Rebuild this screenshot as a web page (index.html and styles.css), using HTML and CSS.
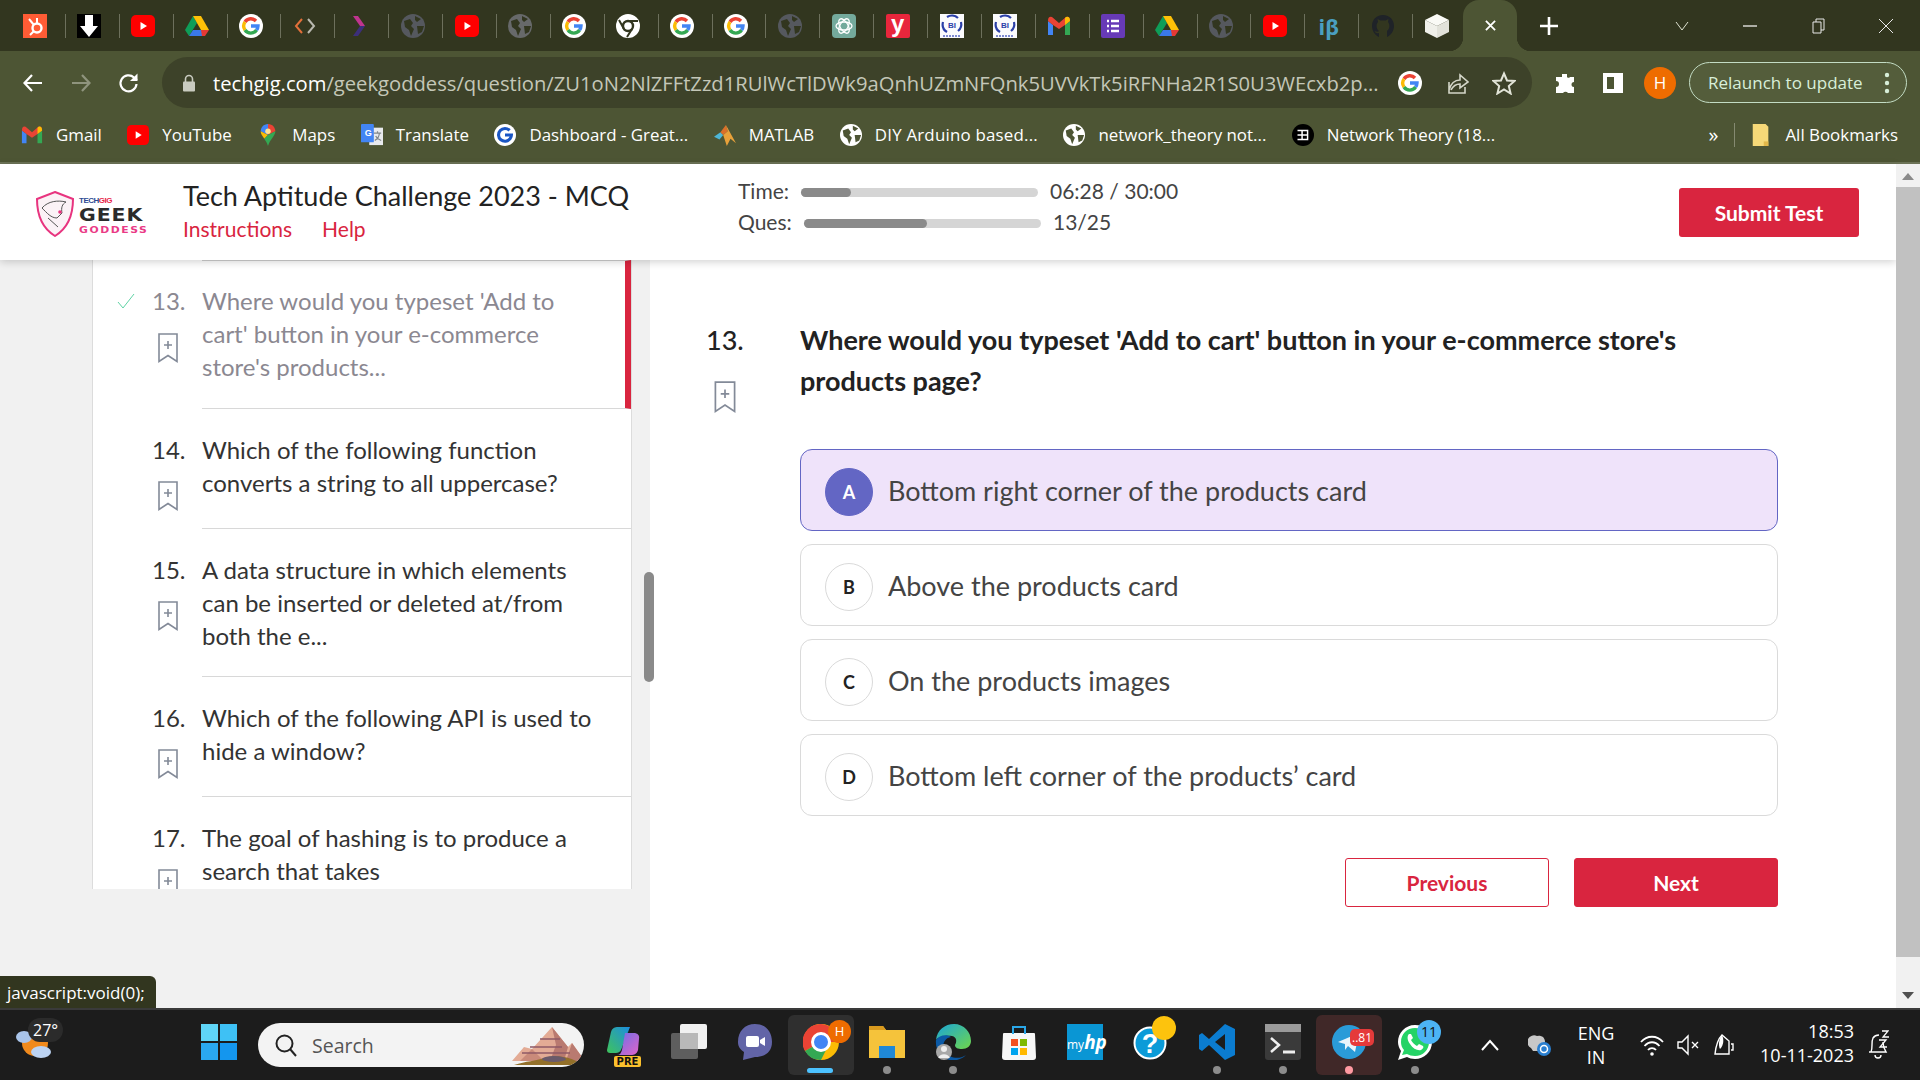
FILE: index.html
```html
<!DOCTYPE html>
<html lang="en">
<head>
    <meta charset="UTF-8">
    <title>Tech Aptitude Challenge 2023 - MCQ</title>
    <link rel="stylesheet" href="styles.css">
</head>
<body>
    <!-- icons used more than once -->
    <svg class="sprite" xmlns="http://www.w3.org/2000/svg">
        <symbol id="i-g" viewBox="0 0 24 24">
            <circle cx="12" cy="12" r="12" fill="#fff"/>
            <g fill="none" stroke-width="3.4">
                <path d="M17 7 A7 7 0 0 0 6 8" stroke="#ea4335"/>
                <path d="M6 8 A7 7 0 0 0 6 16" stroke="#fbbc05"/>
                <path d="M6 16 A7 7 0 0 0 17.6 16" stroke="#34a853"/>
                <path d="M17.6 16 A7 7 0 0 0 19 12 H12" stroke="#4285f4"/>
            </g>
        </symbol>
        <symbol id="i-g-blue" viewBox="0 0 24 24">
            <circle cx="12" cy="12" r="12" fill="#fff"/>
            <path d="M17 7 A7 7 0 1 0 17.6 16 A7 7 0 0 0 19 12 H12" fill="none" stroke="#1a56c4" stroke-width="3.4"/>
        </symbol>
        <symbol id="i-yt" viewBox="0 0 24 24">
            <rect y="1" width="24" height="22" rx="5" fill="#f00"/>
            <path d="M9.5 8 L16 12 L9.5 16z" fill="#fff"/>
        </symbol>
        <symbol id="i-drive" viewBox="0 0 24 24">
            <path d="M8 2 L0 16 L4 22 L12 9z" fill="#0f9d58"/>
            <path d="M8 2 H16 L24 16 H16z" fill="#ffc107"/>
            <path d="M4 22 L8 16 H18 L20 22z" fill="#3a78e8"/>
            <path d="M16 16 H24 L20 22 H17z" fill="#e53935"/>
        </symbol>
        <symbol id="i-gmail" viewBox="0 0 24 24">
            <path d="M1 7 V21 H6 V11z" fill="#4285f4"/>
            <path d="M23 7 V21 H18 V11z" fill="#34a853"/>
            <path d="M1 7 Q1 2 5 3 L12 9 L19 3 Q23 2 23 7 L18 11 L12 15 L6 11z" fill="#ea4335"/>
            <path d="M23 7 Q23 2 19 3 L18 4 V11z" fill="#fbbc05"/>
        </symbol>
        <symbol id="i-globe" viewBox="0 0 24 24">
            <circle cx="12" cy="12" r="12" fill="currentColor"/>
            <path d="M3 7 L9 5 L12 9 L10 12 L13 15 L10 22 L8 16 L4 13z M14 2 L20 5 L16 8 L14 6z M16 12 H23 L21 18 L17 20z" class="land"/>
        </symbol>
        <symbol id="i-bits" viewBox="0 0 24 24">
            <rect width="24" height="24" fill="#fbfbfd"/>
            <g fill="none" stroke="#2b3fa8" stroke-width="2.2">
                <path d="M7 3 A9 9 0 0 1 18 4"/>
                <path d="M21 8 A9 9 0 0 1 18 17"/>
                <path d="M3 8 A9 9 0 0 0 7 18"/>
            </g>
            <text x="12" y="14" class="bits-txt">BI</text>
            <path d="M3 22 H21" stroke="#7f8bd0" stroke-width="2" stroke-dasharray="2 1"/>
        </symbol>
        <symbol id="i-mark" viewBox="0 0 20 30">
            <path d="M1 1 H19 V28.5 L10 22.5 L1 28.5z M10 8 V16 M6 12 H14" fill="none" stroke="currentColor" stroke-width="1.6"/>
        </symbol>
    </svg>

    <div class="tabstrip">
        <div class="tab">
            <svg class="ic" viewBox="0 0 24 24"><rect width="24" height="24" fill="#ff5c35"/><circle cx="14" cy="14" r="4.5" fill="none" stroke="#fff" stroke-width="2.4"/><path d="M14 9 V4 M6 5 L11 11 M11 17 L7 21" stroke="#fff" stroke-width="2"/></svg>
        </div>
        <div class="tab">
            <svg class="ic" viewBox="0 0 24 24"><rect width="24" height="24" fill="#000"/><path d="M8 1 H16 V12 H21 L12 23 L3 12 H8z" fill="#fff"/></svg>
        </div>
        <div class="tab"><svg class="ic"><use href="#i-yt"/></svg></div>
        <div class="tab"><svg class="ic"><use href="#i-drive"/></svg></div>
        <div class="tab"><svg class="ic"><use href="#i-g"/></svg></div>
        <div class="tab">
            <svg class="ic" viewBox="0 0 24 24"><path d="M9 5 L3 12 L9 19" fill="none" stroke="#e2703a" stroke-width="2"/><path d="M15 5 L21 12 L15 19" fill="none" stroke="#b9b9b0" stroke-width="2"/></svg>
        </div>
        <div class="tab">
            <svg class="ic" viewBox="0 0 24 24"><path d="M6 2 H11 L18 12 H13z" fill="#c0348f"/><path d="M6 22 H11 L18 12 H13z" fill="#3c2f7a"/></svg>
        </div>
        <div class="tab globe-gray"><svg class="ic"><use href="#i-globe"/></svg></div>
        <div class="tab"><svg class="ic"><use href="#i-yt"/></svg></div>
        <div class="tab globe-mid"><svg class="ic"><use href="#i-globe"/></svg></div>
        <div class="tab"><svg class="ic"><use href="#i-g"/></svg></div>
        <div class="tab">
            <svg class="ic" viewBox="0 0 24 24"><circle cx="12" cy="12" r="12" fill="#fff"/><circle cx="12" cy="12" r="5" fill="none" stroke="#32361f" stroke-width="2.4"/><path d="M12 7 H22 M8 15 L3 6 M16 15 L11 23" stroke="#32361f" stroke-width="2"/></svg>
        </div>
        <div class="tab"><svg class="ic"><use href="#i-g"/></svg></div>
        <div class="tab"><svg class="ic"><use href="#i-g"/></svg></div>
        <div class="tab globe-gray"><svg class="ic"><use href="#i-globe"/></svg></div>
        <div class="tab">
            <svg class="ic" viewBox="0 0 24 24"><rect width="24" height="24" rx="4" fill="#74aa9c"/><g fill="none" stroke="#fff" stroke-width="1.3"><ellipse cx="12" cy="12" rx="8" ry="4"/><ellipse cx="12" cy="12" rx="8" ry="4" transform="rotate(60 12 12)"/><ellipse cx="12" cy="12" rx="8" ry="4" transform="rotate(120 12 12)"/></g></svg>
        </div>
        <div class="tab"><span class="tab-y">y</span></div>
        <div class="tab"><svg class="ic"><use href="#i-bits"/></svg></div>
        <div class="tab"><svg class="ic"><use href="#i-bits"/></svg></div>
        <div class="tab"><svg class="ic"><use href="#i-gmail"/></svg></div>
        <div class="tab">
            <svg class="ic" viewBox="0 0 24 24"><rect width="24" height="24" rx="2" fill="#673ab7"/><path d="M6 7 H8 M10 7 H18 M6 12 H8 M10 12 H18 M6 17 H8 M10 17 H18" stroke="#fff" stroke-width="2.4"/></svg>
        </div>
        <div class="tab"><svg class="ic"><use href="#i-drive"/></svg></div>
        <div class="tab globe-gray"><svg class="ic"><use href="#i-globe"/></svg></div>
        <div class="tab"><svg class="ic"><use href="#i-yt"/></svg></div>
        <div class="tab"><span class="tab-ib">iβ</span></div>
        <div class="tab">
            <svg class="ic" viewBox="0 0 24 24"><path d="M12 1 C5 1 1 6 1 12 C1 17 4 21 8 23 V19 C5 20 4 18 3.500 17 C6 18 7 18 8 17 C5 15 5 10 7 8 L6.500 5 L9.500 6.500 H14.500 L17.500 5 L17 8 C19 10 19 15 16 17 V23 C20 21 23 17 23 12 C23 6 19 1 12 1z" fill="#1f2328"/></svg>
        </div>
        <div class="tab tab-last">
            <svg class="ic" viewBox="0 0 24 24"><path d="M12 0 L24 6 L12 12 L0 6z" fill="#fafaf6"/><path d="M0 6 L12 12 V24 L0 18z" fill="#f0f0ea"/><path d="M24 6 L12 12 V24 L24 18z" fill="#e2e2da"/></svg>
        </div>
        <div class="tab-active">
            <svg class="tab-x" viewBox="0 0 12 12"><path d="M1 1 L11 11 M11 1 L1 11" stroke="#fff" stroke-width="2"/></svg>
        </div>
        <svg class="tab-new" viewBox="0 0 18 18"><path d="M9 0 V18 M0 9 H18" stroke="#fff" stroke-width="2.600"/></svg>
        <div class="win-ctrls">
            <div class="win-btn">
                <svg class="win-ic" viewBox="0 0 16 16"><path d="M2 4 L8 12 L14 4" fill="none" stroke="#dfe3d2" stroke-width="1"/></svg>
            </div>
            <div class="win-btn">
                <svg class="win-ic" viewBox="0 0 16 16"><path d="M1 8 H15" stroke="#fff" stroke-width="1.2"/></svg>
            </div>
            <div class="win-btn">
                <svg class="win-ic" viewBox="0 0 16 16"><path d="M3 4 H11 V15 H3z M6 4 V1 H14 V12 H11" fill="none" stroke="#e8e8e8" stroke-width="1"/></svg>
            </div>
            <div class="win-btn">
                <svg class="win-ic" viewBox="0 0 16 16"><path d="M1 1 L15 15 M15 1 L1 15" stroke="#e8e8e8" stroke-width="1"/></svg>
            </div>
        </div>
    </div>

    <div class="toolbar">
        <div class="tool-btn">
            <svg class="tool-ic" viewBox="0 0 24 24"><path d="M21 12 H4 M11 4 L3.500 12 L11 20" fill="none" stroke="#fff" stroke-width="2.2"/></svg>
        </div>
        <div class="tool-btn">
            <svg class="tool-ic" viewBox="0 0 24 24"><path d="M3 12 H20 M13 4 L20.500 12 L13 20" fill="none" stroke="#8f947d" stroke-width="2.2"/></svg>
        </div>
        <div class="tool-btn">
            <svg class="tool-ic" viewBox="0 0 24 24"><path d="M19.500 13 A8 8 0 1 1 17 6.500 L20 9" fill="none" stroke="#fff" stroke-width="2.2"/><path d="M20.500 2.500 V10 H13z" fill="#fff"/></svg>
        </div>
        <div class="omnibox">
            <svg class="lock" viewBox="0 0 14 18"><path d="M3.500 8 V5 A3.500 3.500 0 0 1 10.500 5 V8" fill="none" stroke="#c9cbc0" stroke-width="1.600"/><rect x="1" y="7.500" width="12" height="10" rx="1" fill="#c9cbc0"/></svg>
            <span class="url"><b>techgig.com</b>/geekgoddess/question/ZU1oN2NlZFFtZzd1RUlWcTlDWk9aQnhUZmNFQnk5UVVkTk5iRFNHa2R1S0U3WEcxb2p...</span>
            <div class="omni-icons">
                <svg class="omni-ic"><use href="#i-g"/></svg>
                <svg class="omni-ic" viewBox="0 0 24 24"><path d="M4 11 V22 H20 V16 M4 19 C6 12 10 9 15 9 V4 L23 11 L15 17 V13 C11 13 8 15 6 19" fill="none" stroke="#d4d6c8" stroke-width="1.600"/></svg>
                <svg class="omni-ic" viewBox="0 0 24 24"><path d="M12 2.500 L15 9.500 L22.500 10 L16.800 15 L18.600 22.500 L12 18.500 L5.400 22.500 L7.200 15 L1.500 10 L9 9.500z" fill="none" stroke="#e2e4d8" stroke-width="2"/></svg>
            </div>
        </div>
        <div class="tool-btn tool-ext">
            <svg class="tool-ic" viewBox="0 0 24 24"><path d="M9 3 H14 V6 A2 2 0 0 0 17 6 H21 V11 A2.500 2.500 0 0 0 21 16 V22 H15 A3 3 0 0 0 10 22 H3 V16 A3 3 0 0 0 3 10 V6 H9z" fill="#fff"/></svg>
        </div>
        <div class="tool-btn">
            <svg class="tool-ic" viewBox="0 0 24 24"><path d="M2 2 H22 V22 H2z M6 6 V18 H13 V6z" fill="#fff" fill-rule="evenodd"/></svg>
        </div>
        <div class="avatar-slot"><span class="avatar">H</span></div>
        <div class="relaunch">
            <span>Relaunch to update</span>
            <svg class="dots" viewBox="0 0 6 24"><circle cx="3" cy="4" r="2.200"/><circle cx="3" cy="12" r="2.200"/><circle cx="3" cy="20" r="2.200"/></svg>
        </div>
    </div>

    <div class="bookmarks">
        <a class="bm"><svg class="bm-ic"><use href="#i-gmail"/></svg>Gmail</a>
        <a class="bm"><svg class="bm-ic"><use href="#i-yt"/></svg>YouTube</a>
        <a class="bm">
            <svg class="bm-ic" viewBox="0 0 24 24"><path d="M12 0 C7 0 4 4 4 8 L12 12z" fill="#4285f4"/><path d="M12 0 C17 0 20 4 20 8 L12 12z" fill="#ea4335"/><path d="M4 8 C4 11 6 13 8 16 L12 12z" fill="#fbbc05"/><path d="M20 8 C20 13 14 17 12 24 C11 20 9 18 8 16 L12 12z" fill="#34a853"/><circle cx="12" cy="8" r="3" fill="#fde293"/></svg>
            Maps
        </a>
        <a class="bm">
            <svg class="bm-ic" viewBox="0 0 24 24"><rect x="9" y="4" width="15" height="19" fill="#e8eaed"/><rect y="0" width="14" height="20" rx="1" fill="#4285f4"/><text x="4" y="13" class="tr-g">G</text><path d="M14 10 H22 M18 8 V10 M15 18 C18 16 20 13 20 10 M16 13 C17 15 19 17 22 18" fill="none" stroke="#80868b" stroke-width="1.300"/></svg>
            Translate
        </a>
        <a class="bm"><svg class="bm-ic"><use href="#i-g-blue"/></svg>Dashboard - Great...</a>
        <a class="bm">
            <svg class="bm-ic" viewBox="0 0 24 24"><path d="M0 14 L7 9 L10 12 L6 17z" fill="#4db6d6"/><path d="M7 9 L13 1 L15 8 L10 12z" fill="#d9702a"/><path d="M13 1 L24 21 L18 16 L14 24 L10 12 L15 8z" fill="#e8a13a"/></svg>
            MATLAB
        </a>
        <a class="bm bm-wide"><svg class="bm-ic globe-white"><use href="#i-globe"/></svg>DIY Arduino based...</a>
        <a class="bm"><svg class="bm-ic globe-white"><use href="#i-globe"/></svg>network_theory not...</a>
        <a class="bm">
            <svg class="bm-ic" viewBox="0 0 24 24"><circle cx="12" cy="12" r="12" fill="#000"/><path d="M6 7 H17 V17 H6 M6 12 H17 M11 7 V17" fill="none" stroke="#fff" stroke-width="1.600"/></svg>
            Network Theory (18...
        </a>
        <div class="bm-end">
            <span class="bm-more">»</span>
            <span class="bm-sep"></span>
            <a class="bm">
                <svg class="bm-ic" viewBox="0 0 24 24"><path d="M3 0 H17 L20 3 V24 H3z" fill="#f6d978"/><path d="M15 19 H20 V24 H15z" fill="#e2b84a"/></svg>
                All Bookmarks
            </a>
        </div>
    </div>

    <div class="page">
        <div class="page-main">
            <header class="head">
                <div class="logo">
                    <svg class="logo-shield" viewBox="0 0 38 46"><path d="M19 1 L37 8 C37 24 32 37 19 45 C6 37 1 24 1 8z" fill="#fbf2f6" stroke="#e8347f" stroke-width="2"/><path d="M6 17 C12 10 22 9 30 11 C26 13 25 17 26 22 L21 27 C15 27 11 22 6 17z M12 27 L22 36" fill="none" stroke="#555" stroke-width="1"/><circle cx="24" cy="21" r="1.800" fill="#e8347f"/></svg>
                    <div class="logo-txt">
                        <span class="logo-tg">TECH<i>GIG</i></span>
                        <span class="logo-geek">GEEK</span>
                        <span class="logo-god">GODDESS</span>
                    </div>
                </div>
                <div class="head-title">
                    <h1>Tech Aptitude Challenge 2023 - MCQ</h1>
                    <div class="head-links"><a>Instructions</a><a>Help</a></div>
                </div>
                <div class="meters">
                    <div class="meter">
                        <span class="meter-lbl">Time:</span>
                        <span class="bar"><span class="bar-fill" style="width:21%"></span></span>
                        <span class="meter-val">06:28 / 30:00</span>
                    </div>
                    <div class="meter">
                        <span class="meter-lbl">Ques:</span>
                        <span class="bar"><span class="bar-fill" style="width:52%"></span></span>
                        <span class="meter-val">13/25</span>
                    </div>
                </div>
                <a class="btn-submit">Submit Test</a>
            </header>
            <div class="content">
                <aside class="side">
                    <div class="q-list">
                        <div class="q-item q-current">
                            <div class="q-side">
                                <svg class="q-check" viewBox="0 0 18 16"><path d="M1 9 L6 15 L17 1" fill="none" stroke="#5fd3a5" stroke-width="1"/></svg>
                                <span class="q-num">13.</span>
                                <svg class="q-mark"><use href="#i-mark"/></svg>
                            </div>
                            <div class="q-text">Where would you typeset 'Add to cart' button in your e-commerce store's products...</div>
                        </div>
                        <div class="q-item">
                            <div class="q-side">
                                <span class="q-num">14.</span>
                                <svg class="q-mark"><use href="#i-mark"/></svg>
                            </div>
                            <div class="q-text">Which of the following function converts a string to all uppercase?</div>
                        </div>
                        <div class="q-item">
                            <div class="q-side">
                                <span class="q-num">15.</span>
                                <svg class="q-mark"><use href="#i-mark"/></svg>
                            </div>
                            <div class="q-text">A data structure in which elements can be inserted or deleted at/from both the e...</div>
                        </div>
                        <div class="q-item">
                            <div class="q-side">
                                <span class="q-num">16.</span>
                                <svg class="q-mark"><use href="#i-mark"/></svg>
                            </div>
                            <div class="q-text">Which of the following API is used to hide a window?</div>
                        </div>
                        <div class="q-item">
                            <div class="q-side">
                                <span class="q-num">17.</span>
                                <svg class="q-mark"><use href="#i-mark"/></svg>
                            </div>
                            <div class="q-text">The goal of hashing is to produce a search that takes</div>
                        </div>
                    </div>
                    <span class="side-thumb"></span>
                </aside>
                <main class="question">
                    <div class="q-head">
                        <div class="q-head-side">
                            <span>13.</span>
                            <svg class="q-head-mark"><use href="#i-mark"/></svg>
                        </div>
                        <h2>Where would you typeset 'Add to cart' button in your e-commerce store's products page?</h2>
                    </div>
                    <div class="options">
                        <div class="option option-on"><span class="opt-key">A</span>Bottom right corner of the products card</div>
                        <div class="option"><span class="opt-key">B</span>Above the products card</div>
                        <div class="option"><span class="opt-key">C</span>On the products images</div>
                        <div class="option"><span class="opt-key">D</span>Bottom left corner of the products’ card</div>
                    </div>
                    <div class="q-nav">
                        <a class="btn-prev">Previous</a>
                        <a class="btn-next">Next</a>
                    </div>
                </main>
            </div>
        </div>
        <div class="scrollbar">
            <span class="sb-up"></span>
            <span class="sb-thumb"></span>
            <span class="sb-down"></span>
        </div>
        <div class="status">javascript:void(0);</div>
    </div>

    <footer class="taskbar">
        <div class="weather">
            <svg class="weather-ic" viewBox="0 0 38 32"><circle cx="20" cy="16" r="13" fill="#f08a1d"/><ellipse cx="9" cy="10" rx="8" ry="6" fill="#a9c4ea"/><ellipse cx="26" cy="25" rx="10" ry="6" fill="#bcd3f2"/></svg>
            <span class="temp">27°</span>
        </div>
        <div class="task-slot">
            <svg class="task-ic" viewBox="0 0 36 36"><path d="M0 0 H17 V17 H0z" fill="#5fd5f7"/><path d="M19 0 H36 V17 H19z" fill="#3ec1f5"/><path d="M0 19 H17 V36 H0z" fill="#2aa8f0"/><path d="M19 19 H36 V36 H19z" fill="#1496ee"/></svg>
        </div>
        <div class="search">
            <svg class="search-ic" viewBox="0 0 24 24"><circle cx="10.500" cy="10.500" r="8" fill="none" stroke="#222" stroke-width="2"/><path d="M16 16 L22 23" stroke="#222" stroke-width="2"/></svg>
            <span class="search-txt">Search</span>
            <svg class="pyramids" viewBox="0 0 74 44">
                <path d="M2 38 L14 24 L22 26 L42 4 L58 24 L62 20 L72 34 L68 38z" fill="#e3ab95"/>
                <path d="M42 4 L58 24 L54 38 L40 38 L46 22z" fill="#b97a70"/>
                <path d="M22 26 L34 38 H10z" fill="#c98a7a"/>
                <path d="M62 20 L72 34 L68 38 H56z" fill="#b97a70"/>
                <path d="M12 30 H60 M20 24 H52 M30 16 H50" stroke="#8e5a66" stroke-width="1.500"/>
                <path d="M4 42 C16 38 26 38 34 35 C46 31 60 34 70 40 L66 42z" fill="#93702a"/>
                <ellipse cx="44" cy="36" rx="12" ry="3" fill="#6a5a6a"/>
            </svg>
        </div>
        <div class="task-apps">
            <div class="task-slot">
                <svg class="task-ic" viewBox="0 0 36 36"><defs><linearGradient id="cp1" x1="0" y1="1" x2="1" y2="0"><stop offset="0" stop-color="#3fc45b"/><stop offset="1" stop-color="#1c8de0"/></linearGradient><linearGradient id="cp2" x1="0" y1="0" x2="1" y2="1"><stop offset="0" stop-color="#6a6fe8"/><stop offset="1" stop-color="#e264c9"/></linearGradient></defs><path d="M2 26 L6 8 C7 4 10 3 13 3 H25 L16 26 C15 28 13 29 11 29 H5 C3 29 2 28 2 26z" fill="url(#cp1)"/><path d="M20 9 H29 C32 9 35 11 34 15 L33 26 C32 30 29 31 26 31 H12 C15 31 16 29 17 26z" fill="url(#cp2)"/></svg>
                <span class="pre">PRE</span>
            </div>
            <div class="task-slot">
                <svg class="task-ic" viewBox="0 0 36 36"><rect y="9" width="27" height="26" rx="2" fill="#5e5e5e"/><rect x="9" y="0" width="27" height="25" rx="2" fill="#f1f1f1"/><rect x="9" y="9" width="18" height="16" fill="#b9b9b9"/></svg>
            </div>
            <div class="task-slot">
                <svg class="task-ic" viewBox="0 0 36 36"><path d="M18 0 C28 0 35 7 35 18 C35 28 28 33 18 33 L6 36 L7 28 C2 25 1 21 1 18 C1 7 8 0 18 0z" fill="#6264a7"/><rect x="9" y="12" width="13" height="11" rx="2" fill="#fff"/><path d="M23 16 L28 13 V22 L23 19z" fill="#fff"/></svg>
            </div>
            <div class="task-slot task-on">
                <svg class="task-ic" viewBox="0 0 36 36"><circle cx="18" cy="18" r="18" fill="#fbbc05"/><path d="M18 0 A18 18 0 0 0 2 27 L18 18 H35 A18 18 0 0 0 18 0z" fill="#ea4335"/><path d="M2 27 A18 18 0 0 0 18 36 L27 18 H18z" fill="#34a853"/><circle cx="18" cy="18" r="8.500" fill="#4285f4" stroke="#fff" stroke-width="3"/></svg>
                <span class="badge-h">H</span>
                <i class="run run-on"></i>
            </div>
            <div class="task-slot">
                <svg class="task-ic" viewBox="0 0 36 36"><path d="M0 2 H14 L17 6 H36 V34 H0z" fill="#f5c33b"/><path d="M0 2 H14 L17 6 H0z" fill="#d99a1e"/><rect x="10" y="22" width="16" height="12" fill="#1f88d6"/></svg>
                <i class="run"></i>
            </div>
            <div class="task-slot">
                <svg class="task-ic" viewBox="0 0 36 36"><defs><linearGradient id="edge1" x1="0" y1="0" x2="1" y2="1"><stop offset="0" stop-color="#1aa6d8"/><stop offset="1" stop-color="#6fd64a"/></linearGradient></defs><path d="M1 16 C2 6 10 0 19 0 C29 0 36 8 36 17 C36 22 32 25 27 25 C23 25 20 24 20 21 C22 18 22 13 17 12 C10 11 3 13 1 16z" fill="url(#edge1)"/><path d="M1 16 C4 11 12 10 16 13 C9 14 6 22 10 28 C14 34 24 36 31 31 C26 36 20 37 15 36 C6 34 0 26 1 16z" fill="#0b5aa6"/><circle cx="9" cy="28" r="8" fill="#a8a8a8"/><circle cx="9" cy="25" r="3" fill="#eee"/><path d="M3.500 34 C4 29 14 29 14.500 34z" fill="#eee"/></svg>
                <i class="run"></i>
            </div>
            <div class="task-slot">
                <svg class="task-ic" viewBox="0 0 36 36"><path d="M3 9 H33 A1 1 0 0 1 34 10 L35 33 A3 3 0 0 1 32 36 H4 A3 3 0 0 1 1 33 L2 10 A1 1 0 0 1 3 9z" fill="#f7f7f7"/><path d="M12 10 V3 H24 V10" fill="none" stroke="#2aa7e8" stroke-width="2"/><rect x="10" y="15" width="7" height="7" fill="#f25022"/><rect x="19" y="15" width="7" height="7" fill="#7fba00"/><rect x="10" y="24" width="7" height="7" fill="#00a4ef"/><rect x="19" y="24" width="7" height="7" fill="#ffb900"/></svg>
            </div>
            <div class="task-slot"><span class="myhp">my<i>hp</i></span></div>
            <div class="task-slot">
                <svg class="task-ic" viewBox="0 0 36 36"><circle cx="17" cy="19" r="15.500" fill="#0b9bd8" stroke="#fff" stroke-width="2"/><text x="17" y="29" class="help-q">?</text></svg>
                <span class="help-dot"></span>
            </div>
            <div class="task-slot">
                <svg class="task-ic" viewBox="0 0 36 36"><path d="M26 0 L36 5 V31 L26 36 L10 21 L3 27 L0 25 V11 L3 9 L10 15z M26 10 L16 18 L26 26z" fill="#0b7cd0" fill-rule="evenodd"/></svg>
                <i class="run"></i>
            </div>
            <div class="task-slot">
                <svg class="task-ic" viewBox="0 0 36 36"><rect width="36" height="36" rx="3" fill="#3a3a3a"/><rect width="36" height="8" fill="#9a9a9a"/><path d="M6 14 L14 21 L6 28" fill="none" stroke="#eee" stroke-width="2.500"/><path d="M18 28 H30" stroke="#eee" stroke-width="3"/></svg>
                <i class="run"></i>
            </div>
            <div class="task-slot task-alert">
                <svg class="task-ic" viewBox="0 0 36 36"><circle cx="18" cy="18" r="17" fill="#2a9bd8"/><path d="M7 18 L28 9 L24 28 L17 22 L14 26 L14 20z" fill="#e8f4fb"/></svg>
                <span class="badge-red">..81</span>
                <i class="run run-alert"></i>
            </div>
            <div class="task-slot">
                <svg class="task-ic" viewBox="0 0 36 36"><path d="M18 1 C28 1 35 9 35 18 C35 28 27 35 18 35 C15 35 12 34 10 33 L1 36 L4 27 C2 24 1 21 1 18 C1 9 8 1 18 1z" fill="#fff"/><path d="M18 4 C26 4 32 10 32 18 C32 26 26 32 18 32 C15 32 12 31 10 30 L5 31 L7 26 C5 24 4 21 4 18 C4 10 10 4 18 4z" fill="#25d366"/><path d="M12 10 C10 12 10 16 13 20 C16 25 21 27 24 26 C26 25 27 23 26 22 L22 20 L20 22 C18 21 15 18 14 16 L16 14 L14 10z" fill="#fff"/></svg>
                <span class="badge-blue">11</span>
                <i class="run"></i>
            </div>
        </div>
        <div class="tray">
            <svg class="tray-chev" viewBox="0 0 18 12"><path d="M1 11 L9 2 L17 11" fill="none" stroke="#fff" stroke-width="2"/></svg>
            <svg class="tray-cloud" viewBox="0 0 24 24"><path d="M3 15 A6 6 0 0 1 9 3 A6 6 0 0 1 17 9 L12 18 H5z" fill="#c8c8c8"/><circle cx="16" cy="16" r="7" fill="#2a7fd0"/><circle cx="16" cy="16" r="3.500" fill="none" stroke="#fff" stroke-width="1.500"/></svg>
            <div class="tray-lang"><span>ENG</span><span>IN</span></div>
            <svg class="tray-ic" viewBox="0 0 24 24"><path d="M1 9 C7 2 17 2 23 9 M4.500 13 C9 8 15 8 19.500 13 M8 17 C10 14.500 14 14.500 16 17" fill="none" stroke="#fff" stroke-width="1.800"/><circle cx="12" cy="21" r="1.800" fill="#fff"/></svg>
            <svg class="tray-ic" viewBox="0 0 24 24"><path d="M2 9 H6 L12 3 V21 L6 15 H2z M16 9 L22 15 M22 9 L16 15" fill="none" stroke="#fff" stroke-width="1.400"/></svg>
            <svg class="tray-ic" viewBox="0 0 24 24"><path d="M3 21 H17 V8 L10 2 C6 6 4 12 3 21z" fill="none" stroke="#fff" stroke-width="1.400"/><path d="M10 2 C12 6 12 12 8 16 C6 12 7 6 10 2z" fill="#fff"/><path d="M19 11 H21 V17 H19" fill="none" stroke="#fff" stroke-width="1.400"/></svg>
            <div class="tray-time"><span>18:53</span><span>10-11-2023</span></div>
            <div class="tray-bell">
                <svg viewBox="0 0 22 30"><path d="M4 22 C6 18 4 12 6 8 C8 5 10 5 12 5 M16 12 C16 16 17 19 19 22 H2 M8 25 A3 3 0 0 0 14 25" fill="none" stroke="#fff" stroke-width="1.400"/><path d="M12 10 H19 L13 17 H20 M15 1 H21 L16 7 H22" fill="none" stroke="#fff" stroke-width="1.300"/></svg>
            </div>
        </div>
    </footer>
</body>
</html>
```

FILE: styles.css
```css
*{
    margin: 0;
    padding: 0;
    box-sizing: border-box;
}
html,body{
    height: 100%;
    overflow: hidden;
}
body{
    display: flex;
    flex-direction: column;
    width: 1920px;
    height: 1080px;
    background: #fff;
    font-family: "Open Sans", "Noto Sans", sans-serif;
    color: #fff;
}
.sprite{
    display: none;
}
.land{
    fill: var(--land, #32361f);
}
.bits-txt{
    fill: #2b3fa8;
    font: 700 8px "Liberation Sans", sans-serif;
    text-anchor: middle;
}

/* browser tabs */
.tabstrip{
    display: flex;
    align-items: center;
    height: 51px;
    padding-left: 12px;
    background: #32361f;
    flex: none;
}
.tab{
    position: relative;
    display: flex;
    align-items: center;
    justify-content: center;
    width: 53.9px;
    height: 24px;
    padding-right: 6px;
    border-right: 1px solid #6d705c;
    flex: none;
}
.tab-last{
    border-right: 0;
}
.ic{
    display: block;
    width: 24px;
    height: 24px;
}
.globe-gray{
    color: #55585e;
}
.globe-mid{
    color: #67696a;
}
.tab-y{
    display: block;
    width: 24px;
    height: 24px;
    border-radius: 2px;
    background: #e8263c;
    color: #fff;
    font: 700 24px/19px "Liberation Sans", sans-serif;
    text-align: center;
}
.tab-ib{
    color: #4a9fc0;
    font: 700 22px/24px "Noto Sans", sans-serif;
}
.tab-active{
    position: relative;
    display: flex;
    align-items: center;
    justify-content: center;
    width: 54px;
    height: 51px;
    margin-left: -4px;
    border-radius: 16px 16px 0 0;
    background: #4d5534;
    flex: none;
}
.tab-active::before,.tab-active::after{
    content: "";
    position: absolute;
    bottom: 0;
    width: 14px;
    height: 14px;
}
.tab-active::before{
    left: -14px;
    background: radial-gradient(circle at 0 0, transparent 14px, #4d5534 14.5px);
}
.tab-active::after{
    right: -14px;
    background: radial-gradient(circle at 100% 0, transparent 14px, #4d5534 14.5px);
}
.tab-x{
    width: 11px;
    height: 11px;
}
.tab-new{
    width: 18px;
    height: 18px;
    margin-left: 23px;
    flex: none;
}
.win-ctrls{
    display: flex;
    margin-left: auto;
}
.win-btn{
    display: flex;
    align-items: center;
    justify-content: center;
    width: 68px;
    height: 51px;
}
.win-ic{
    width: 16px;
    height: 16px;
}

/* browser toolbar */
.toolbar{
    display: flex;
    align-items: flex-start;
    height: 64px;
    padding: 6px 0 0 9px;
    background: #4d5534;
    flex: none;
}
.tool-btn{
    display: flex;
    align-items: center;
    justify-content: center;
    width: 48px;
    height: 51px;
    flex: none;
}
.tool-ic{
    width: 24px;
    height: 24px;
}
.tool-ext{
    margin-left: 9px;
}
.omnibox{
    display: flex;
    align-items: center;
    width: 1370px;
    height: 51px;
    margin-left: 9px;
    padding-left: 20px;
    border-radius: 26px;
    background: #3d4229;
    flex: none;
}
.lock{
    width: 14px;
    height: 18px;
    flex: none;
}
.url{
    margin-left: 17px;
    color: #c4c7b8;
    font-size: 20.2px;
    white-space: nowrap;
}
.url b{
    color: #fff;
    font-weight: 400;
}
.omni-icons{
    display: flex;
    gap: 23px;
    margin-left: auto;
    padding-right: 16px;
}
.omni-ic{
    display: block;
    width: 24px;
    height: 24px;
}
.avatar-slot{
    display: flex;
    align-items: center;
    justify-content: center;
    width: 46px;
    height: 51px;
    flex: none;
}
.avatar{
    width: 32px;
    height: 32px;
    border-radius: 50%;
    background: #ee6c00;
    font-size: 17px;
    line-height: 32px;
    text-align: center;
}
.relaunch{
    display: flex;
    align-items: center;
    justify-content: space-between;
    width: 218px;
    height: 41px;
    margin: 5px 0 0 6px;
    padding: 0 16px 0 18px;
    border: 1.5px solid #c3dcc4;
    border-radius: 21px;
    background: #545d3b;
    color: #d8efd9;
    font-size: 17px;
    white-space: nowrap;
    flex: none;
}
.dots{
    width: 6px;
    height: 24px;
    fill: #d8efd9;
}

/* bookmarks bar */
.bookmarks{
    display: flex;
    align-items: center;
    gap: 25.5px;
    height: 49px;
    padding: 0 0 8px 21px;
    border-bottom: 2px solid #6c7357;
    background: #4d5534;
    flex: none;
}
.bm{
    display: flex;
    align-items: center;
    gap: 13px;
    font-size: 16.9px;
    white-space: nowrap;
}
.bm-wide{
    letter-spacing: .2px;
}
.bm-ic{
    display: block;
    width: 22px;
    height: 24px;
    flex: none;
    --land: #4d5534;
}
.globe-white{
    color: #fff;
}
.tr-g{
    fill: #fff;
    font: 700 10px "Liberation Sans", sans-serif;
}
.bm-end{
    display: flex;
    align-items: center;
    margin-left: auto;
    padding-right: 22px;
}
.bm-more{
    font-size: 20px;
    line-height: 1;
}
.bm-sep{
    width: 1px;
    height: 24px;
    margin: 0 15px 0 16px;
    background: #858a71;
}

/* test page */
.page{
    position: relative;
    display: flex;
    flex: 1;
    min-height: 0;
    color: #333;
    font-family: Lato, "Liberation Sans", sans-serif;
}
.page-main{
    display: flex;
    flex-direction: column;
    flex: 1;
    min-width: 0;
}
.head{
    position: relative;
    z-index: 2;
    display: flex;
    align-items: center;
    height: 96px;
    background: #fff;
    box-shadow: 0 2px 8px rgba(0,0,0,.18);
    flex: none;
}
.logo{
    display: flex;
    align-items: center;
    gap: 5px;
    width: 147px;
    margin-left: 36px;
    flex: none;
}
.logo-shield{
    width: 38px;
    height: 46px;
    margin-top: 4px;
    flex: none;
}
.logo-txt{
    display: flex;
    flex-direction: column;
    align-items: flex-start;
    margin-top: 6px;
    font-family: "DejaVu Sans", sans-serif;
    font-weight: 700;
    line-height: normal;
    white-space: nowrap;
}
.logo-tg{
    color: #2d4a93;
    font-family: "Liberation Sans", sans-serif;
    font-size: 8px;
    letter-spacing: -.5px;
}
.logo-tg i{
    color: #e8264a;
    font-style: normal;
}
.logo-geek{
    color: #2b2b2b;
    font-size: 17px;
    letter-spacing: .8px;
    transform: scaleX(1.2);
    transform-origin: left;
}
.logo-god{
    color: #ea3a86;
    font-size: 9px;
    letter-spacing: 1.300px;
    transform: scaleX(1.2);
    transform-origin: left;
}
.head-title{
    width: 555px;
    padding-bottom: 7px;
    flex: none;
}
.head-title h1{
    color: #222;
    font-size: 27px;
    font-weight: 400;
    line-height: 40px;
}
.head-links{
    display: flex;
    gap: 30px;
    color: #d9253f;
    font-size: 21px;
    line-height: 26px;
}
.meters{
    display: flex;
    flex-direction: column;
    gap: 5px;
    padding-bottom: 12px;
    flex: none;
}
.meter{
    display: flex;
    align-items: center;
    height: 26px;
    color: #444;
    font-size: 21px;
}
.meter-lbl{
    width: 63px;
}
.meter:last-child .meter-lbl{
    width: 66px;
}
.bar{
    width: 237px;
    height: 9px;
    margin-top: 4px;
    border-radius: 5px;
    background: #d5d5d5;
}
.bar-fill{
    display: block;
    height: 100%;
    border-radius: 5px;
    background: #8a8a8a;
}
.meter-val{
    margin-left: 12px;
}
.btn-submit{
    width: 180px;
    height: 49px;
    margin-left: auto;
    margin-right: 37px;
    border-radius: 3px;
    background: #d9253f;
    color: #fff;
    font-size: 21px;
    font-weight: 700;
    line-height: 49px;
    text-align: center;
}
.content{
    display: flex;
    flex: 1;
    min-height: 0;
}

/* question list */
.side{
    position: relative;
    width: 650px;
    padding-left: 92px;
    background: #f1f1f1;
    flex: none;
}
.q-list{
    width: 540px;
    height: 629px;
    overflow: hidden;
    border-left: 1px solid #dcdcdc;
    border-right: 1px solid #dcdcdc;
    background: #fff;
}
.q-item{
    display: flex;
}
.q-side{
    position: relative;
    display: flex;
    flex-direction: column;
    align-items: flex-start;
    width: 109px;
    padding: 24px 0 0 59px;
    flex: none;
}
.q-num{
    font-size: 24px;
    line-height: 33px;
}
.q-mark{
    display: block;
    width: 20px;
    height: 30px;
    margin: 15px 0 0 6px;
    color: #838a98;
}
.q-check{
    position: absolute;
    left: 24px;
    top: 35px;
    width: 18px;
    height: 16px;
}
.q-text{
    flex: 1;
    min-height: 120px;
    padding: 24px 30px 24px 0;
    border-bottom: 1px solid #d8d8d8;
    color: #333;
    font-size: 24px;
    line-height: 33px;
}
.q-current .q-mark{
    margin-top: 16px;
}
.q-current .q-check{
    top: 33px;
}
.q-current .q-text{
    padding: 23px 30px 25px 0;
    border-top: 1px solid #d0d0d0;
    border-right: 6px solid #d9253f;
    color: #8b8891;
}
.q-current .q-num{
    color: #8b8891;
}
.side-thumb{
    position: absolute;
    left: 644px;
    top: 312px;
    z-index: 1;
    width: 10px;
    height: 110px;
    border-radius: 5px;
    background: #8a8a8a;
}

/* question pane */
.question{
    flex: 1;
    min-width: 0;
    padding: 59px 0 0 56px;
    background: #fff;
}
.q-head{
    display: flex;
}
.q-head-side{
    width: 94px;
    color: #222;
    font-size: 27px;
    font-weight: 700;
    line-height: 41px;
    flex: none;
}
.q-head-side span{
    display: block;
    font-weight: 500;
}
.q-head-mark{
    display: block;
    width: 22px;
    height: 32px;
    margin: 21px 0 0 8px;
    color: #838a98;
}
.q-head h2{
    width: 930px;
    color: #222;
    font-size: 27px;
    font-weight: 700;
    line-height: 41px;
}
.options{
    display: flex;
    flex-direction: column;
    gap: 13px;
    width: 978px;
    margin: 36px 0 0 94px;
}
.option{
    display: flex;
    align-items: center;
    gap: 15px;
    height: 82px;
    padding-left: 24px;
    border: 1px solid #dadada;
    border-radius: 12px;
    background: #fff;
    color: #444;
    font-size: 27px;
}
.option-on{
    border-color: #6366c4;
    background: #efe3fa;
}
.opt-key{
    width: 48px;
    height: 48px;
    margin-top: 3px;
    border: 1px solid #dadada;
    border-radius: 50%;
    background: #fff;
    color: #222;
    font-size: 18px;
    font-weight: 700;
    line-height: 47px;
    text-align: center;
    flex: none;
}
.option-on .opt-key{
    border-color: #6366c4;
    background: #6366c4;
    color: #fff;
}
.q-nav{
    display: flex;
    justify-content: flex-end;
    gap: 25px;
    width: 978px;
    margin: 42px 0 0 94px;
}
.btn-prev,.btn-next{
    width: 204px;
    height: 49px;
    border: 1px solid #d9253f;
    border-radius: 3px;
    font-size: 21px;
    font-weight: 700;
    line-height: 47px;
    text-align: center;
}
.btn-prev{
    background: #fff;
    color: #d9253f;
}
.btn-next{
    background: #d9253f;
    color: #fff;
}

/* page scrollbar */
.scrollbar{
    position: relative;
    z-index: 3;
    display: flex;
    flex-direction: column;
    align-items: center;
    width: 24px;
    background: #f1f1f1;
    flex: none;
}
.sb-up,.sb-down{
    width: 0;
    height: 0;
    border-left: 6px solid transparent;
    border-right: 6px solid transparent;
    flex: none;
}
.sb-up{
    margin-top: 9px;
    border-bottom: 7px solid #8a8a8a;
}
.sb-down{
    margin-top: auto;
    margin-bottom: 9px;
    border-top: 7px solid #505050;
}
.sb-thumb{
    width: 100%;
    height: 770px;
    margin-top: 7px;
    background: #c1c1c1;
}
.status{
    position: absolute;
    left: 0;
    bottom: 0;
    z-index: 4;
    width: 156px;
    height: 32px;
    padding-left: 7px;
    border-radius: 0 6px 0 0;
    background: #32361f;
    color: #fff;
    font: 400 17px/33px "Open Sans", sans-serif;
    white-space: nowrap;
}

/* windows taskbar */
.taskbar{
    display: flex;
    align-items: center;
    height: 72px;
    border-top: 2px solid #3a3a3a;
    background: #1c1c1c;
    flex: none;
}
.weather{
    position: relative;
    width: 186px;
    height: 70px;
    flex: none;
}
.weather-ic{
    position: absolute;
    left: 15px;
    top: 17px;
    width: 38px;
    height: 32px;
}
.temp{
    position: absolute;
    left: 28px;
    top: 8px;
    padding: 0 5px;
    border-radius: 12px;
    background: #2b2b2b;
    font-size: 16px;
    line-height: 24px;
}
.task-slot{
    position: relative;
    display: flex;
    align-items: center;
    justify-content: center;
    width: 66px;
    height: 60px;
    padding-bottom: 6px;
    border-radius: 6px;
    flex: none;
}
.task-ic{
    display: block;
    width: 36px;
    height: 36px;
}
.task-on{
    background: #2f2f2f;
}
.task-alert{
    background: #402828;
}
.task-apps{
    display: flex;
    margin-left: 6px;
    flex: none;
}
.run{
    position: absolute;
    left: 29px;
    bottom: 1px;
    width: 8px;
    height: 8px;
    border-radius: 50%;
    background: #8c8c8c;
}
.run-on{
    left: 19px;
    width: 26px;
    height: 5px;
    bottom: 2px;
    border-radius: 3px;
    background: #4cc2ff;
}
.run-alert{
    background: #ff9aa2;
}
.search{
    display: flex;
    align-items: center;
    width: 326px;
    height: 44px;
    margin-left: 6px;
    padding-left: 16px;
    overflow: hidden;
    border-radius: 22px;
    background: #f3f3f3;
    flex: none;
}
.search-ic{
    width: 24px;
    height: 24px;
    flex: none;
}
.search-txt{
    margin-left: 14px;
    color: #555;
    font-size: 19.5px;
}
.pyramids{
    width: 74px;
    height: 44px;
    margin-left: auto;
    flex: none;
}
.pre{
    position: absolute;
    left: 24px;
    bottom: 8px;
    width: 27px;
    height: 11px;
    border-radius: 2px;
    background: #fbc02d;
    color: #111;
    font: 700 10px/11px "DejaVu Sans", sans-serif;
    text-align: center;
}
.badge-h{
    position: absolute;
    right: 3px;
    top: 5px;
    width: 23px;
    height: 23px;
    border-radius: 50%;
    background: #ee6c00;
    font-size: 13px;
    line-height: 23px;
    text-align: center;
}
.myhp{
    display: block;
    width: 36px;
    height: 36px;
    background: #0a96d4;
    color: #fff;
    font-size: 12px;
    line-height: 36px;
    text-align: center;
    white-space: nowrap;
}
.myhp i{
    font-size: 19px;
    font-weight: 700;
}
.help-q{
    fill: #fff;
    font: 700 27px "Liberation Sans", sans-serif;
    text-anchor: middle;
}
.help-dot{
    position: absolute;
    left: 34px;
    top: 1px;
    width: 24px;
    height: 24px;
    border-radius: 50%;
    background: #fdc30d;
}
.badge-red{
    position: absolute;
    left: 34px;
    top: 14px;
    width: 24px;
    height: 17px;
    border-radius: 5px;
    background: #e53a3a;
    font-size: 12px;
    line-height: 17px;
    text-align: center;
}
.badge-blue{
    position: absolute;
    left: 35px;
    top: 5px;
    width: 24px;
    height: 24px;
    border-radius: 50%;
    background: #4cb4f5;
    color: #111;
    font-size: 14px;
    line-height: 24px;
    text-align: center;
}
.tray{
    display: flex;
    align-items: center;
    flex: 1;
    height: 70px;
    padding-left: 33px;
    font-size: 18px;
}
.tray-chev{
    width: 18px;
    height: 12px;
    flex: none;
}
.tray-cloud{
    width: 24px;
    height: 24px;
    margin-left: 29px;
    flex: none;
}
.tray-lang{
    display: flex;
    flex-direction: column;
    align-items: center;
    gap: 1px;
    width: 40px;
    margin-left: 24px;
    line-height: 23px;
}
.tray-ic{
    width: 24px;
    height: 24px;
    margin-left: 12px;
    flex: none;
}
.tray-lang + .tray-ic{
    margin-left: 24px;
}
.tray-time{
    display: flex;
    flex-direction: column;
    align-items: flex-end;
    gap: 1px;
    width: 100px;
    margin-left: 18px;
    padding-bottom: 4px;
    line-height: 23px;
}
.tray-bell{
    width: 22px;
    height: 30px;
    margin-left: 13px;
    flex: none;
}
.tray-bell svg{
    display: block;
    width: 22px;
    height: 30px;
}
```
